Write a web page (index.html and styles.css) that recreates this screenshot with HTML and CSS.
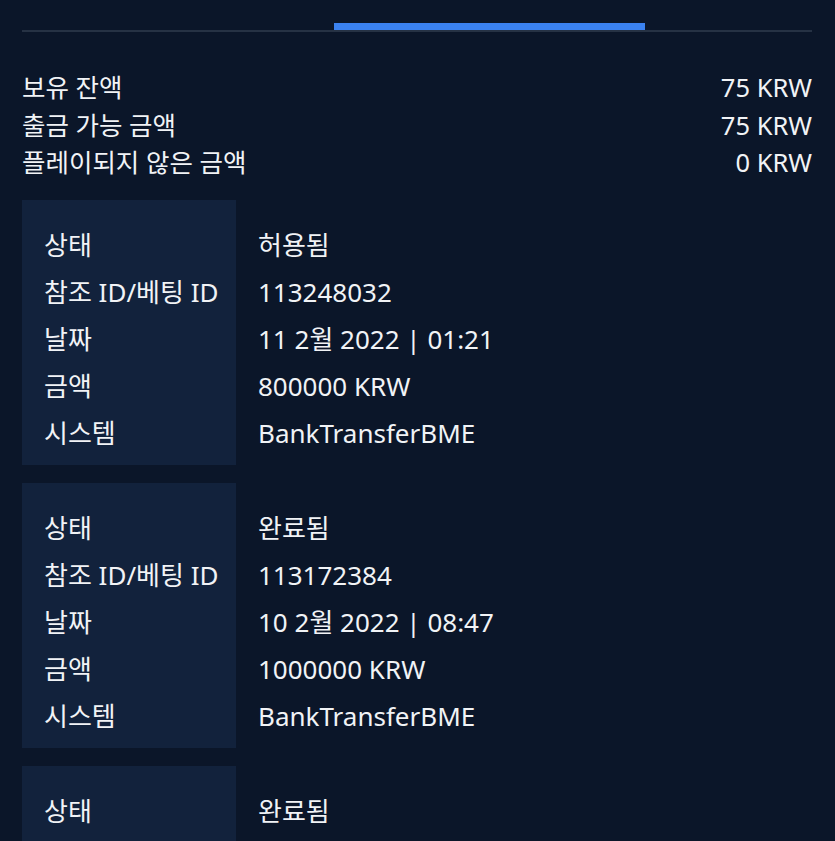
FILE: index.html
```html
<!DOCTYPE html>
<html lang="ko">
<head>
  <meta charset="UTF-8" />
  <meta name="viewport" content="width=device-width, initial-scale=1.0" />
  <title>거래 내역</title>
  <link rel="stylesheet" href="styles.css">
</head>
<body>

<div class="page">
  <div class="tabs">
    <div class="tab-indicator"></div>
  </div>

  <div class="summary">
    <div class="summary-row"><span>보유 잔액</span><span>75 KRW</span></div>
    <div class="summary-row"><span>출금 가능 금액</span><span>75 KRW</span></div>
    <div class="summary-row"><span>플레이되지 않은 금액</span><span>0 KRW</span></div>
  </div>

  <div class="history">
    <dl class="card">
      <dt>상태</dt><dd>허용됨</dd>
      <dt>참조 ID/베팅 ID</dt><dd>113248032</dd>
      <dt>날짜</dt><dd>11 2월 2022 | 01:21</dd>
      <dt>금액</dt><dd>800000 KRW</dd>
      <dt>시스템</dt><dd>BankTransferBME</dd>
    </dl>

    <dl class="card">
      <dt>상태</dt><dd>완료됨</dd>
      <dt>참조 ID/베팅 ID</dt><dd>113172384</dd>
      <dt>날짜</dt><dd>10 2월 2022 | 08:47</dd>
      <dt>금액</dt><dd>1000000 KRW</dd>
      <dt>시스템</dt><dd>BankTransferBME</dd>
    </dl>

    <dl class="card">
      <dt>상태</dt><dd>완료됨</dd>
    </dl>
  </div>
</div>

</body>
</html>
```

FILE: styles.css
```css
body {
  font-family: 'Noto Sans', 'Noto Sans CJK KR', sans-serif;
  background-color: #0b1629;
  margin: 0;
  padding: 0;
  color: #f1f3f6;
  height: 841px;
  overflow: hidden;
}

.page {
  padding: 0 23px 0 22px;
}

.tabs {
  padding-top: 23px;
  border-bottom: 2px solid #263244;
}

.tab-indicator {
  width: 311px;
  height: 7px;
  margin-left: 312px;
  background-color: #3b82f0;
}

.summary {
  margin-top: 37px;
  margin-bottom: 18px;
}

.summary-row {
  display: flex;
  justify-content: space-between;
  font-size: 25.5px;
  line-height: 37.5px;
}

.history {
  display: flex;
  flex-direction: column;
  gap: 18px;
}

.card {
  display: grid;
  grid-template-columns: 214px 1fr;
  margin: 0;
  padding: 22px 0 8px;
  background: linear-gradient(to right, #12223c 214px, transparent 214px);
  font-size: 26px;
  line-height: 47px;
}

.card dt {
  padding-left: 22px;
}

.card dd {
  margin: 0;
  padding-left: 22px;
  white-space: pre;
}
```
